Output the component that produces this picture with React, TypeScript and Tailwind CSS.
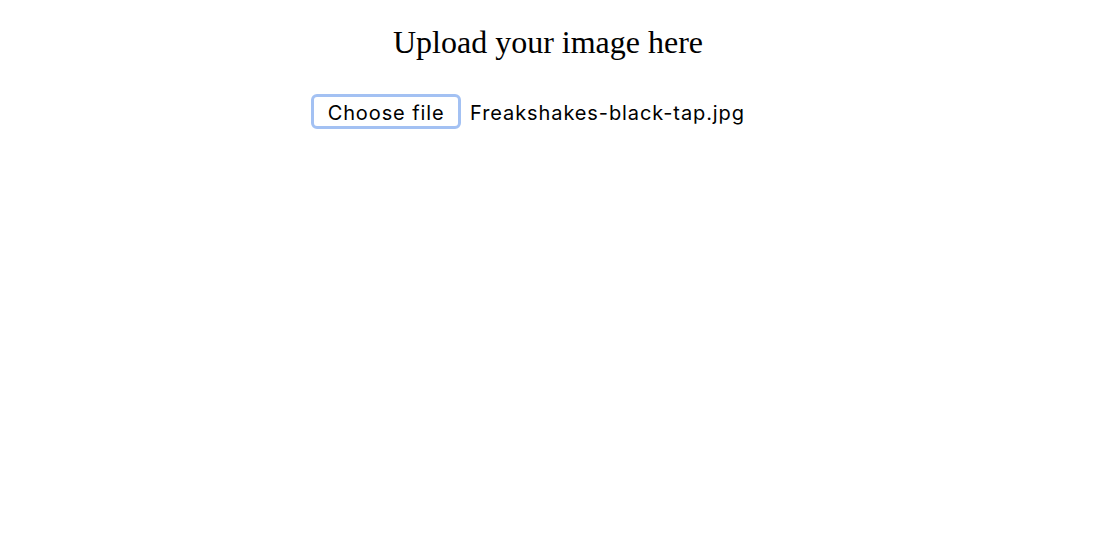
import React from 'react';

export default function App() {
    return (
        <div className="min-h-[540px] w-full bg-white text-black">
            {/* Heading */}
            <div className="flex justify-center pt-[22px] pr-2">
                <h1 className="text-[32px] leading-[40px] font-['Liberation_Serif',serif]">
                    Upload your image here
                </h1>
            </div>

            {/* File picker */}
            <div className="flex justify-center mt-[32px] pr-[48px]">
                <label className="flex items-center gap-[9px] font-['Inter',sans-serif] text-[20px] tracking-[0.9px]">
                    <span className="h-[35px] w-[150px] pt-[2px] flex items-center justify-center rounded-[6px] border-[3px] border-[#a3c1f3] bg-white">
                        Choose file
                    </span>
                    <span className="pt-[2px]">Freakshakes-black-tap.jpg</span>
                    <input type="file" className="hidden" />
                </label>
            </div>
        </div>
    );
}
